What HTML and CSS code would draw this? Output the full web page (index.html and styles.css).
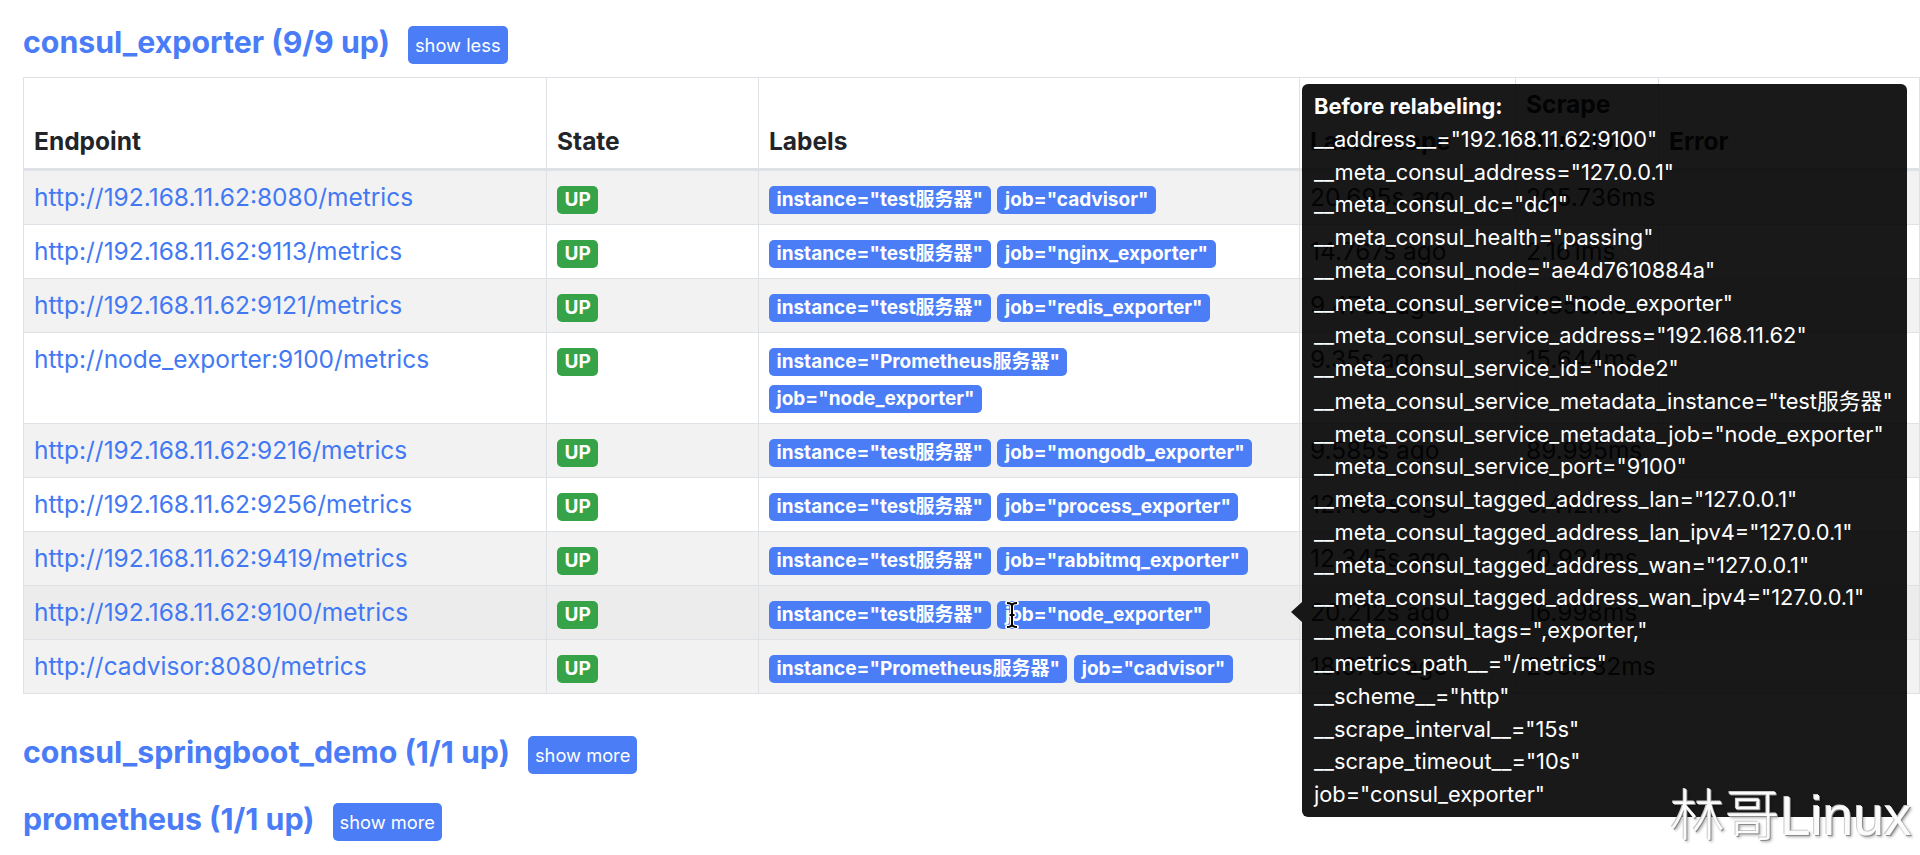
FILE: index.html
```html
<!DOCTYPE html>
<html lang="zh">
<head>
<meta charset="utf-8">
<title>Targets</title>
<link rel="stylesheet" href="styles.css">
</head>
<body>
<main class="page">
  <section class="pool">
    <div class="pool-head">
      <h2 class="pool-title">consul_exporter (9/9 up)</h2>
      <button class="btn">show less</button>
    </div>
    <div class="table-wrap">
      <table class="targets">
        <colgroup>
          <col class="c-endpoint"><col class="c-state"><col class="c-labels"><col class="c-last"><col class="c-dur"><col class="c-err">
        </colgroup>
        <thead>
          <tr><th>Endpoint</th><th>State</th><th>Labels</th><th>Last Scrape</th><th>Scrape Duration</th><th>Error</th></tr>
        </thead>
        <tbody>
          <tr>
            <td><a href="#">http://192.168.11.62:8080/metrics</a></td>
            <td><span class="up">UP</span></td>
            <td><span class="lbl">instance="test服务器"</span> <span class="lbl">job="cadvisor"</span></td>
            <td>20.695s ago</td><td>205.736ms</td><td></td>
          </tr>
          <tr>
            <td><a href="#">http://192.168.11.62:9113/metrics</a></td>
            <td><span class="up">UP</span></td>
            <td><span class="lbl">instance="test服务器"</span> <span class="lbl">job="nginx_exporter"</span></td>
            <td>14.767s ago</td><td>2.161ms</td><td></td>
          </tr>
          <tr>
            <td><a href="#">http://192.168.11.62:9121/metrics</a></td>
            <td><span class="up">UP</span></td>
            <td><span class="lbl">instance="test服务器"</span> <span class="lbl">job="redis_exporter"</span></td>
            <td>9.476s ago</td><td>4.356ms</td><td></td>
          </tr>
          <tr>
            <td><a href="#">http://node_exporter:9100/metrics</a></td>
            <td><span class="up">UP</span></td>
            <td><span class="lbl">instance="Prometheus服务器"</span><br><span class="lbl">job="node_exporter"</span></td>
            <td>9.35s ago</td><td>15.644ms</td><td></td>
          </tr>
          <tr>
            <td><a href="#">http://192.168.11.62:9216/metrics</a></td>
            <td><span class="up">UP</span></td>
            <td><span class="lbl">instance="test服务器"</span> <span class="lbl">job="mongodb_exporter"</span></td>
            <td>9.585s ago</td><td>89.995ms</td><td></td>
          </tr>
          <tr>
            <td><a href="#">http://192.168.11.62:9256/metrics</a></td>
            <td><span class="up">UP</span></td>
            <td><span class="lbl">instance="test服务器"</span> <span class="lbl">job="process_exporter"</span></td>
            <td>12.495s ago</td><td>6.412ms</td><td></td>
          </tr>
          <tr>
            <td><a href="#">http://192.168.11.62:9419/metrics</a></td>
            <td><span class="up">UP</span></td>
            <td><span class="lbl">instance="test服务器"</span> <span class="lbl">job="rabbitmq_exporter"</span></td>
            <td>12.345s ago</td><td>10.924ms</td><td></td>
          </tr>
          <tr class="hover">
            <td><a href="#">http://192.168.11.62:9100/metrics</a></td>
            <td><span class="up">UP</span></td>
            <td><span class="lbl">instance="test服务器"</span> <span class="lbl">job="node_exporter"</span></td>
            <td>20.212s ago</td><td>16.998ms</td><td></td>
          </tr>
          <tr>
            <td><a href="#">http://cadvisor:8080/metrics</a></td>
            <td><span class="up">UP</span></td>
            <td><span class="lbl">instance="Prometheus服务器"</span> <span class="lbl">job="cadvisor"</span></td>
            <td>18.673s ago</td><td>203.782ms</td><td></td>
          </tr>
        </tbody>
      </table>

      <div class="tip">
        <div class="tip-title">Before relabeling:</div>
        <div>__address__="192.168.11.62:9100"</div>
        <div>__meta_consul_address="127.0.0.1"</div>
        <div>__meta_consul_dc="dc1"</div>
        <div>__meta_consul_health="passing"</div>
        <div>__meta_consul_node="ae4d7610884a"</div>
        <div>__meta_consul_service="node_exporter"</div>
        <div>__meta_consul_service_address="192.168.11.62"</div>
        <div>__meta_consul_service_id="node2"</div>
        <div>__meta_consul_service_metadata_instance="test服务器"</div>
        <div>__meta_consul_service_metadata_job="node_exporter"</div>
        <div>__meta_consul_service_port="9100"</div>
        <div>__meta_consul_tagged_address_lan="127.0.0.1"</div>
        <div>__meta_consul_tagged_address_lan_ipv4="127.0.0.1"</div>
        <div>__meta_consul_tagged_address_wan="127.0.0.1"</div>
        <div>__meta_consul_tagged_address_wan_ipv4="127.0.0.1"</div>
        <div>__meta_consul_tags=",exporter,"</div>
        <div>__metrics_path__="/metrics"</div>
        <div>__scheme__="http"</div>
        <div>__scrape_interval__="15s"</div>
        <div>__scrape_timeout__="10s"</div>
        <div>job="consul_exporter"</div>
      </div>
    </div>
  </section>

  <section class="pool pool-collapsed">
    <div class="pool-head">
      <h2 class="pool-title">consul_springboot_demo (1/1 up)</h2>
      <button class="btn">show more</button>
    </div>
  </section>

  <section class="pool pool-collapsed pool-tight">
    <div class="pool-head">
      <h2 class="pool-title">prometheus (1/1 up)</h2>
      <button class="btn">show more</button>
    </div>
  </section>
</main>

<svg class="ibeam" width="16" height="30" viewBox="0 0 16 30" aria-hidden="true">
  <path d="M3 3 Q8 3 8 6 Q8 3 13 3 M8 6 V24 M3 27 Q8 27 8 24 Q8 27 13 27 M5.5 15 H10.5" stroke="#fff" stroke-width="4" fill="none" stroke-linecap="round"/>
  <path d="M3 3 Q8 3 8 6 Q8 3 13 3 M8 6 V24 M3 27 Q8 27 8 24 Q8 27 13 27 M5.5 15 H10.5" stroke="#000" stroke-width="2" fill="none"/>
</svg>

<div class="watermark">林哥Linux</div>
</body>
</html>
```

FILE: styles.css
```css
html, body {
  margin: 0;
  padding: 0;
  height: 855px;
  overflow: hidden;
  background: #fff;
}

body {
  position: relative;
  font-family: Inter, "Noto Sans CJK SC", sans-serif;
  font-size: 24.5px;
  line-height: 37px;
  color: #212529;
}

.page {
  padding: 26px 0 0 23px;
}

.pool-head {
  display: flex;
  align-items: center;
  gap: 18px;
  height: 38px;
}

.pool-title {
  margin: 0;
  padding-bottom: 7px;
  font-size: 30.3px;
  line-height: 38px;
  font-weight: 700;
  color: #4a7cf7;
}

.btn {
  font-family: inherit;
  font-size: 18.3px;
  line-height: 26px;
  padding: 6px 7px;
  border: 0;
  border-radius: 5px;
  background: #4b7df7;
  color: #fff;
}

.table-wrap {
  position: relative;
  margin-top: 13px;
}

.targets {
  width: 1897px;
  table-layout: fixed;
  border-collapse: collapse;
}

.c-endpoint { width: 523px; }
.c-state { width: 212px; }
.c-labels { width: 541px; }
.c-last { width: 216px; }
.c-dur { width: 143px; }

.targets th,
.targets td {
  border: 1px solid #dee2e6;
  padding: 8px 9px 8px 10px;
  text-align: left;
  vertical-align: top;
}

.targets th {
  vertical-align: bottom;
  font-weight: 700;
  border-bottom: 3px solid #dee2e6;
}

.targets tbody tr:nth-child(odd) {
  background: #f2f2f2;
}

.targets tbody tr.hover {
  background: #ececec;
}

.targets a {
  color: #4279f3;
  text-decoration: none;
}

.up,
.lbl {
  display: inline-block;
  font-size: 19px;
  line-height: 1;
  font-weight: 700;
  color: #fff;
  padding: 4.5px 7.5px;
  border-radius: 5px;
}

.up {
  background: #37a348;
}

.lbl {
  background: #4b7df7;
}

.tip {
  position: absolute;
  left: 1279px;
  top: 7px;
  padding: 6px 14px 6px 12px;
  background: rgba(0, 0, 0, 0.9);
  color: #fff;
  border-radius: 6px;
  font-size: 21.8px;
  line-height: 32.76px;
  white-space: nowrap;
}

.tip::before {
  content: "";
  position: absolute;
  left: -11px;
  top: 518px;
  border-style: solid;
  border-width: 10px 11px 10px 0;
  border-color: transparent rgba(0, 0, 0, 0.9) transparent transparent;
}

.tip-title {
  font-weight: 700;
}

.pool-collapsed {
  margin-top: 42px;
}

.pool-tight {
  margin-top: 29px;
}

.ibeam {
  position: absolute;
  left: 1004px;
  top: 600px;
}

.watermark {
  position: absolute;
  left: 1670px;
  top: 784px;
  font-family: "Liberation Sans", "Noto Sans CJK SC", sans-serif;
  font-size: 55px;
  line-height: 64px;
  font-weight: 300;
  color: #fbfbfb;
  text-shadow: 1px 1px 0 #8a8a8a, -1px -1px 0 #c8c8c8, 2px 2px 3px rgba(0, 0, 0, 0.35);
}
```
